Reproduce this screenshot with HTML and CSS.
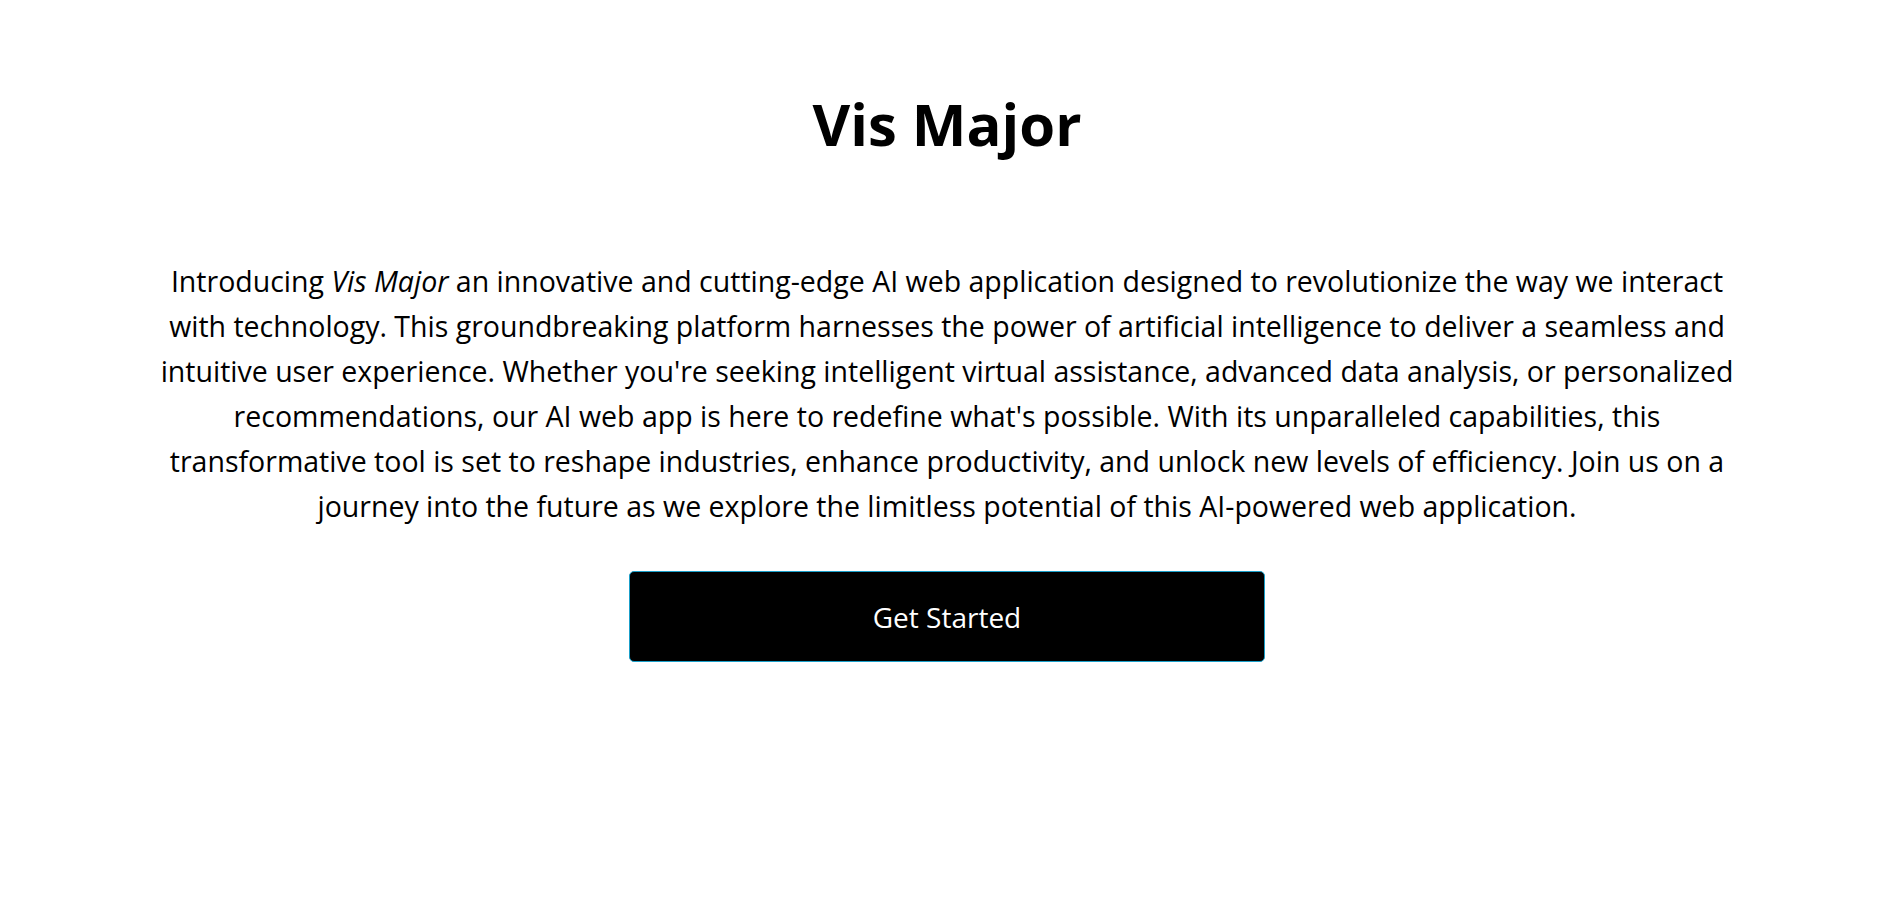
FILE: index.html
```html
<!DOCTYPE html>
<html lang="en">
<head>
<meta charset="utf-8">
<title>Vis Major</title>
<link rel="stylesheet" href="styles.css">
</head>
<body>
<main class="hero">
  <h1 class="title">Vis Major</h1>
  <p class="intro">Introducing <em>Vis Major</em> an innovative and cutting-edge AI web application designed to revolutionize the way we interact with technology. This groundbreaking platform harnesses the power of artificial intelligence to deliver a seamless and intuitive user experience. Whether you're seeking intelligent virtual assistance, advanced data analysis, or personalized recommendations, our AI web app is here to redefine what's possible. With its unparalleled capabilities, this transformative tool is set to reshape industries, enhance productivity, and unlock new levels of efficiency. Join us on a journey into the future as we explore the limitless potential of this AI-powered web application.</p>
  <button class="cta" type="button">Get Started</button>
</main>
</body>
</html>
```
FILE: styles.css
```css
html, body {
  margin: 0;
  padding: 0;
  background: #ffffff;
}
body {
  font-family: "Open Sans", "Noto Sans", sans-serif;
  color: #000;
}
.hero {
  display: flex;
  flex-direction: column;
  align-items: center;
  padding: 84px 0 0;
}
.title {
  margin: 0;
  font-size: 58px;
  font-weight: 700;
  line-height: 80px;
}
.intro {
  margin: 95px 0 0;
  width: 1610px;
  text-align: center;
  font-size: 28.5px;
  line-height: 44.9px;
}
.intro em {
  font-style: italic;
}
.cta {
  margin-top: 43px;
  width: 636px;
  height: 91px;
  background: #000;
  color: #fff;
  border: 1px solid #1a9fc9;
  border-radius: 5px;
  font-family: "Open Sans", "Noto Sans", sans-serif;
  font-size: 28px;
  cursor: pointer;
}
```
